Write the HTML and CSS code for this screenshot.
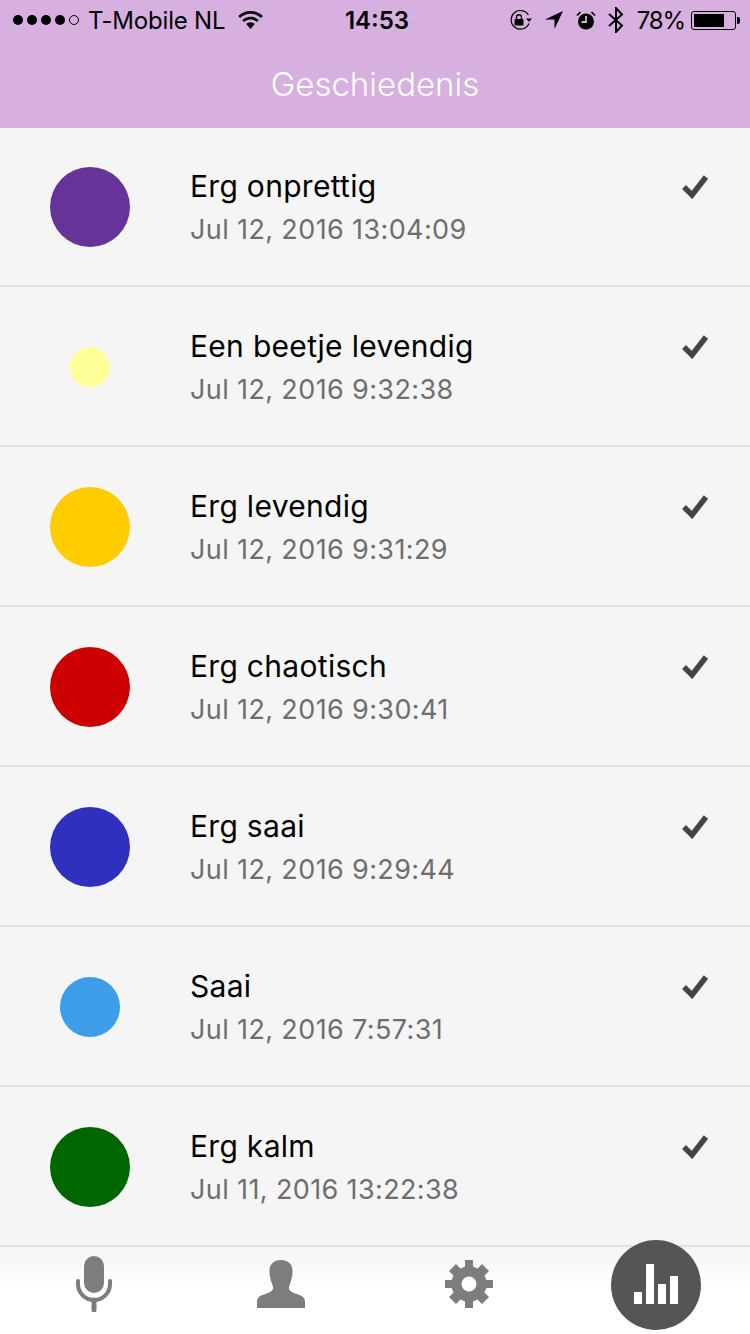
FILE: index.html
```html
<!DOCTYPE html>
<html lang="nl">
<head>
  <meta charset="UTF-8" />
  <title>Geschiedenis</title>
  <link rel="stylesheet" href="styles.css">
</head>
<body>
  <div class="app">
    <header class="top">
      <div class="status-bar">
        <div class="status-left">
          <span class="dots"><i></i><i></i><i></i><i></i><i class="off"></i></span>
          <span class="carrier">T-Mobile NL</span>
          <svg class="wifi" width="25" height="18" viewBox="0 0 25 18"><path d="M12.5 0C7.7 0 3.4 1.9.2 5l1.9 2C4.8 4.400 8.400 2.800 12.500 2.800S20.200 4.400 22.900 7l1.900-2C21.600 1.900 17.300 0 12.500 0zM12.500 5.700c-3.200 0-6.100 1.300-8.200 3.300l1.900 2c1.600-1.600 3.800-2.500 6.300-2.500s4.700.9 6.300 2.500l1.900-2c-2.100-2-5-3.300-8.200-3.300zM12.500 11.300c-1.700 0-3.200.7-4.300 1.700l4.300 5 4.300-5c-1.100-1-2.600-1.700-4.300-1.700z"/></svg>
        </div>
        <div class="time">14:53</div>
        <div class="status-right">
          <svg width="24" height="20" viewBox="0 0 24 20"><path d="M20 13.500A9.300 9.300 0 1 1 19.400 5" fill="none" stroke="#000" stroke-width="1.200"/><path d="M17 8.500h6L20 12z"/><rect x="5.500" y="9" width="9" height="6.500" rx="1"/><path d="M7.500 9V7.300a2.500 2.500 0 0 1 5 0V9" fill="none" stroke="#000" stroke-width="1.400"/></svg>
          <svg class="gap-loc" width="18" height="18" viewBox="0 0 18 18"><path d="M18 0 0 8.500h9.500V18z"/></svg>
          <svg class="gap-alarm" width="20" height="19" viewBox="0 0 20 19"><circle cx="10" cy="10.500" r="8"/><path d="M10 5v6H5.500" fill="none" stroke="#d7b0e0" stroke-width="1.800"/><path d="M1 4.500 4.500 1M19 4.500 15.500 1" stroke="#000" stroke-width="1.600"/></svg>
          <svg class="gap-bt" width="16" height="26" viewBox="0 0 16 26"><path d="M1 7l13 11.500L8 25V1l6 6.500L1 19" fill="none" stroke="#000" stroke-width="2"/></svg>
          <span class="pct">78%</span>
          <span class="battery"><span class="battery-fill"></span></span>
        </div>
      </div>
      <h1 class="title">Geschiedenis</h1>
    </header>

    <main class="list">
      <div class="row">
        <div class="dot-col"><span class="dot big purple"></span></div>
        <div class="info"><div class="name">Erg onprettig</div><div class="date">Jul 12, 2016 13:04:09</div></div>
        <svg class="check" width="28" height="26" viewBox="0 0 28 26"><path d="M3 14l8 8L25 4" fill="none" stroke="#444" stroke-width="5.500"/></svg>
      </div>
      <div class="row">
        <div class="dot-col"><span class="dot small yellow"></span></div>
        <div class="info"><div class="name">Een beetje levendig</div><div class="date">Jul 12, 2016 9:32:38</div></div>
        <svg class="check" width="28" height="26" viewBox="0 0 28 26"><path d="M3 14l8 8L25 4" fill="none" stroke="#444" stroke-width="5.500"/></svg>
      </div>
      <div class="row">
        <div class="dot-col"><span class="dot big amber"></span></div>
        <div class="info"><div class="name">Erg levendig</div><div class="date">Jul 12, 2016 9:31:29</div></div>
        <svg class="check" width="28" height="26" viewBox="0 0 28 26"><path d="M3 14l8 8L25 4" fill="none" stroke="#444" stroke-width="5.500"/></svg>
      </div>
      <div class="row">
        <div class="dot-col"><span class="dot big red"></span></div>
        <div class="info"><div class="name">Erg chaotisch</div><div class="date">Jul 12, 2016 9:30:41</div></div>
        <svg class="check" width="28" height="26" viewBox="0 0 28 26"><path d="M3 14l8 8L25 4" fill="none" stroke="#444" stroke-width="5.500"/></svg>
      </div>
      <div class="row">
        <div class="dot-col"><span class="dot big blue"></span></div>
        <div class="info"><div class="name">Erg saai</div><div class="date">Jul 12, 2016 9:29:44</div></div>
        <svg class="check" width="28" height="26" viewBox="0 0 28 26"><path d="M3 14l8 8L25 4" fill="none" stroke="#444" stroke-width="5.500"/></svg>
      </div>
      <div class="row">
        <div class="dot-col"><span class="dot medium sky"></span></div>
        <div class="info"><div class="name">Saai</div><div class="date">Jul 12, 2016 7:57:31</div></div>
        <svg class="check" width="28" height="26" viewBox="0 0 28 26"><path d="M3 14l8 8L25 4" fill="none" stroke="#444" stroke-width="5.500"/></svg>
      </div>
      <div class="row">
        <div class="dot-col"><span class="dot big green"></span></div>
        <div class="info"><div class="name">Erg kalm</div><div class="date">Jul 11, 2016 13:22:38</div></div>
        <svg class="check" width="28" height="26" viewBox="0 0 28 26"><path d="M3 14l8 8L25 4" fill="none" stroke="#444" stroke-width="5.500"/></svg>
      </div>
    </main>

    <nav class="tabs">
      <div class="tab">
        <svg width="36" height="56" viewBox="0 0 36 56"><rect x="8" y="0" width="20" height="37" rx="10" fill="#7d7d7d"/><path d="M2 25v3a16 16 0 0 0 32 0v-3" fill="none" stroke="#7d7d7d" stroke-width="4" stroke-linecap="round"/><path d="M18 44v10" stroke="#7d7d7d" stroke-width="5" stroke-linecap="round"/></svg>
      </div>
      <div class="tab">
        <svg width="48" height="48" viewBox="0 0 48 48"><path d="M24 0c7 0 11.500 4 11.500 11 0 4-.5 6.500-1.500 10-1 3-2 4.500-2 7 0 3.500 4 4.500 9 6.500 4.500 1.500 7 3 7 7.500v6H0v-6c0-4.500 2.500-6 7-7.500 5-2 9-3 9-6.500 0-2.500-1-4-2-7-1-3.500-1.500-6-1.500-10C12.500 4 17 0 24 0z" fill="#7d7d7d"/></svg>
      </div>
      <div class="tab">
        <svg width="48" height="48" viewBox="0 0 48 48"><path fill="#7d7d7d" fill-rule="evenodd" d="M20 0h8v6.500l4.500 1.900L37 4l7 7-4.500 4.500 1.900 4.500H48v8h-6.600l-1.900 4.500L44 37l-7 7-4.500-4.500-4.500 1.900V48h-8v-6.600l-4.500-1.900L11 44l-7-7 4.500-4.500L6.600 28H0v-8h6.600l1.900-4.500L4 11l7-7 4.500 4.400L20 6.500zM24 16.500a7.500 7.500 0 1 0 0 15 7.500 7.500 0 0 0 0-15z"/></svg>
      </div>
      <div class="tab">
        <span class="tab-active">
          <svg width="44" height="40" viewBox="0 0 44 40"><path fill="#fff" d="M0 28h8v12H0zM12 0h8v40h-8zM24 20h8v20h-8zM36 12h8v28h-8z"/></svg>
        </span>
      </div>
    </nav>
  </div>
</body>
</html>
```

FILE: styles.css
```css
html, body {
  margin: 0;
  padding: 0;
}

body {
  font-family: Inter, "Liberation Sans", sans-serif;
  background-color: #f5f5f5;
  color: #000;
}

.app {
  width: 750px;
  height: 1334px;
  display: flex;
  flex-direction: column;
  overflow: hidden;
}

.top {
  background-color: #d7b0e0;
  height: 128px;
}

.status-bar {
  height: 40px;
  display: grid;
  grid-template-columns: 1fr auto 1fr;
  align-items: center;
  font-size: 24px;
}

.status-left, .status-right {
  display: flex;
  align-items: center;
}

.status-left {
  padding-left: 13px;
}

.status-right {
  justify-content: flex-end;
  padding-right: 11px;
}

.dots {
  display: flex;
  gap: 4px;
}

.dots i {
  width: 10px;
  height: 10px;
  border-radius: 50%;
  background-color: #000;
}

.dots i.off {
  background: none;
  box-sizing: border-box;
  border: 1px solid #000;
}

.carrier {
  margin-left: 9px;
  letter-spacing: -0.2px;
}

.wifi {
  margin-left: 13px;
}

.time {
  padding-left: 4px;
  font-weight: 600;
}

.gap-loc { margin-left: 12px; }
.gap-alarm { margin-left: 13px; }
.gap-bt { margin-left: 12px; }

.pct {
  margin-left: 13px;
  letter-spacing: -1.1px;
}

.battery {
  position: relative;
  margin-left: 6px;
  margin-right: 3px;
  width: 45px;
  height: 19px;
  box-sizing: border-box;
  border: 1px solid #000;
  border-radius: 3px;
  padding: 2px;
  display: flex;
}

.battery::after {
  content: "";
  position: absolute;
  right: -5px;
  top: 5px;
  width: 3px;
  height: 7px;
  background-color: #000;
  border-radius: 0 2px 2px 0;
}

.battery-fill {
  width: 78%;
  background-color: #000;
}

.title {
  margin: 0;
  height: 88px;
  line-height: 88px;
  text-align: center;
  font-size: 33px;
  font-weight: 300;
  color: #fff;
}

.list {
  flex: 1;
}

.row {
  height: 159px;
  margin-bottom: 1px;
  padding-top: 1px;
  box-sizing: border-box;
  border-bottom: 2px solid #e0e0e0;
  display: flex;
  align-items: center;
  position: relative;
}

.dot-col {
  width: 180px;
  display: flex;
  justify-content: center;
}

.dot {
  border-radius: 50%;
}

.dot.big { width: 80px; height: 80px; }
.dot.medium { width: 60px; height: 60px; }
.dot.small { width: 40px; height: 40px; }

.purple { background-color: #663399; }
.yellow { background-color: #ffff99; }
.amber { background-color: #ffcc00; }
.red { background-color: #cc0000; }
.blue { background-color: #3030bf; }
.sky { background-color: #3d9de8; }
.green { background-color: #006600; }

.info {
  flex: 1;
  padding-left: 10px;
  margin-top: 4px;
}

.name {
  font-size: 30px;
  line-height: 40px;
  margin-bottom: 2px;
  letter-spacing: 0.3px;
}

.date {
  font-size: 27px;
  line-height: 44px;
  letter-spacing: 0.38px;
  color: #6e6e6e;
}

.check {
  position: absolute;
  right: 41px;
  top: 45px;
}

.tabs {
  position: relative;
  height: 86px;
  box-sizing: border-box;
  padding-bottom: 12px;
  display: flex;
  background: linear-gradient(#f5f5f5, #fff 50%);
}

.tab {
  flex: 1;
  display: flex;
  justify-content: center;
  align-items: center;
}

.tab svg {
  margin-top: -2px;
}

.tab-active {
  flex: none;
  width: 90px;
  height: 90px;
  border-radius: 50%;
  background-color: #555;
  display: flex;
  align-items: center;
  justify-content: center;
}
```
